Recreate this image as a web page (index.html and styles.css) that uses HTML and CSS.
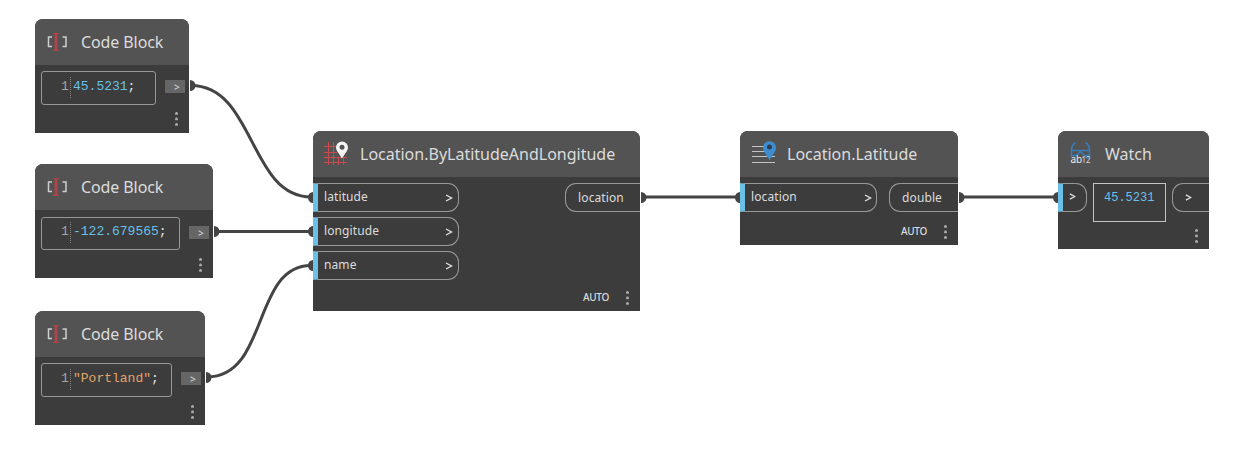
FILE: index.html
```html
<!DOCTYPE html>
<html lang="en">
<head>
<meta charset="utf-8">
<title>Location graph</title>
<link rel="stylesheet" href="styles.css">
</head>
<body>
<main class="canvas">
  <svg class="wires" width="1254" height="456" viewBox="0 0 1254 456">
    <g class="wire-paths">
      <path d="M191 85.500C255 85.500 249 197 311 197"/>
      <path d="M215 231.500H311"/>
      <path d="M207 377C269 377 252 265.500 311 265.500"/>
      <path d="M642 197H739"/>
      <path d="M960 197H1057"/>
    </g>
    <g class="wire-ends">
      <path d="M190 80a5.500 5.500 0 0 1 0 11zM214 226a5.500 5.500 0 0 1 0 11zM206 372a5.500 5.500 0 0 1 0 11zM641 192a5.500 5.500 0 0 1 0 11zM959 192a5.500 5.500 0 0 1 0 11z"/>
      <path d="M313 192a5 5.500 0 0 0 0 11zM313 226a5 5.500 0 0 0 0 11zM313 260a5 5.500 0 0 0 0 11zM740 192a5 5.500 0 0 0 0 11zM1058 192a5 5.500 0 0 0 0 11z"/>
    </g>
  </svg>

  <section class="node code-node code-latitude">
    <header class="head">
      <svg class="icon" width="28" height="28" viewBox="0 0 28 28"><path class="bracket" d="M8 9H4.500V18.500H8M18.500 9H22V18.500H18.500"/><path class="cursor" d="M12 5.500V22.500"/><path class="cursor-serif" d="M9 5.500H15M9 22.500H15"/></svg>
      <h2 class="title">Code Block</h2>
    </header>
    <div class="code-row">
      <div class="editor"><span class="line">1</span><code class="number">45.5231<b class="semi">;</b></code></div>
      <span class="tag">&gt;</span>
    </div>
    <footer class="foot"><i class="menu"></i></footer>
  </section>

  <section class="node code-node code-longitude">
    <header class="head">
      <svg class="icon" width="28" height="28" viewBox="0 0 28 28"><path class="bracket" d="M8 9H4.500V18.500H8M18.500 9H22V18.500H18.500"/><path class="cursor" d="M12 5.500V22.500"/><path class="cursor-serif" d="M9 5.500H15M9 22.500H15"/></svg>
      <h2 class="title">Code Block</h2>
    </header>
    <div class="code-row">
      <div class="editor"><span class="line">1</span><code class="number">-122.679565<b class="semi">;</b></code></div>
      <span class="tag">&gt;</span>
    </div>
    <footer class="foot"><i class="menu"></i></footer>
  </section>

  <section class="node code-node code-name">
    <header class="head">
      <svg class="icon" width="28" height="28" viewBox="0 0 28 28"><path class="bracket" d="M8 9H4.500V18.500H8M18.500 9H22V18.500H18.500"/><path class="cursor" d="M12 5.500V22.500"/><path class="cursor-serif" d="M9 5.500H15M9 22.500H15"/></svg>
      <h2 class="title">Code Block</h2>
    </header>
    <div class="code-row">
      <div class="editor"><span class="line">1</span><code class="string">"Portland"<b class="semi">;</b></code></div>
      <span class="tag">&gt;</span>
    </div>
    <footer class="foot"><i class="menu"></i></footer>
  </section>

  <section class="node node-create">
    <header class="head">
      <svg class="icon" width="28" height="28" viewBox="0 0 28 28"><path class="grid" d="M1 6.500H14M1 12.500H14M1 17.500H24M1 22.500H24M5.500 2V25M10.500 2V25M15.500 17V25M20.500 17V25"/><path class="pin-light" fill-rule="evenodd" d="M19 1.500a6 6 0 0 0-6 6c0 3 3 6 6 11 3-5 6-8 6-11a6 6 0 0 0-6-6zm0 3.200a2.500 2.500 0 1 1 0 5 2.500 2.500 0 0 1 0-5z"/></svg>
      <h2 class="title">Location.ByLatitudeAndLongitude</h2>
    </header>
    <div class="ports">
      <div class="inputs">
        <div class="port in"><span>latitude</span><svg class="chevron" width="8" height="8" viewBox="0 0 8 8"><path d="M1 1L6.500 4L1 7"/></svg></div>
        <div class="port in"><span>longitude</span><svg class="chevron" width="8" height="8" viewBox="0 0 8 8"><path d="M1 1L6.500 4L1 7"/></svg></div>
        <div class="port in"><span>name</span><svg class="chevron" width="8" height="8" viewBox="0 0 8 8"><path d="M1 1L6.500 4L1 7"/></svg></div>
      </div>
      <div class="port out"><span>location</span></div>
    </div>
    <footer class="foot"><span class="lacing">AUTO</span><i class="menu"></i></footer>
  </section>

  <section class="node node-latitude">
    <header class="head">
      <svg class="icon" width="28" height="28" viewBox="0 0 28 28"><path class="rules" d="M2 6.500H14M2 11.500H15M2 16.500H25M2 22.500H25"/><path class="pin-blue" d="M19.500 1.200a6.500 6.500 0 0 0-6.500 6.500c0 3.500 3.500 7 6.500 12.500 3-5.500 6.500-9 6.500-12.500a6.500 6.500 0 0 0-6.500-6.500z"/><circle class="pin-eye" cx="19.500" cy="7" r="2.500"/></svg>
      <h2 class="title">Location.Latitude</h2>
    </header>
    <div class="ports">
      <div class="inputs">
        <div class="port in"><span>location</span><svg class="chevron" width="8" height="8" viewBox="0 0 8 8"><path d="M1 1L6.500 4L1 7"/></svg></div>
      </div>
      <div class="port out"><span>double</span></div>
    </div>
    <footer class="foot"><span class="lacing">AUTO</span><i class="menu"></i></footer>
  </section>

  <section class="node node-watch">
    <header class="head">
      <svg class="icon" width="28" height="28" viewBox="0 0 28 28"><path class="glasses" d="M7.500 2.500C5 4 3.500 7 3.500 10.500V17M17.500 2.500C20 4 21.500 7 21.500 10.500V17M3.500 10.500H21.500M4 15.500H8.500L12.500 11.500L16.500 15.500H21.500M17 16L18.500 18H21.500"/><text class="ab" x="2.500" y="23">ab</text><text class="digits" x="13.500" y="23">12</text></svg>
      <h2 class="title">Watch</h2>
    </header>
    <div class="ports">
      <div class="inputs">
        <div class="port in"><svg class="chevron" width="7" height="7" viewBox="0 0 8 8"><path d="M1 1L6.500 4L1 7"/></svg></div>
      </div>
      <output class="value">45.5231</output>
      <div class="port out"><svg class="chevron" width="7" height="7" viewBox="0 0 8 8"><path d="M1 1L6.500 4L1 7"/></svg></div>
    </div>
    <footer class="foot"><i class="menu"></i></footer>
  </section>
</main>
</body>
</html>
```
FILE: styles.css
```css
* { box-sizing: border-box; }
body { margin: 0; background: #fff; }
.canvas {
  position: relative;
  width: 1254px;
  height: 456px;
  overflow: hidden;
  font-family: "Noto Sans", sans-serif;
  color: #dcdcdc;
}
.wires { position: absolute; left: 0; top: 0; }
.wire-paths { fill: none; stroke: #444; stroke-width: 3; }
.wire-ends { fill: #444; }

.node {
  position: absolute;
  display: flex;
  flex-direction: column;
  background: #3c3c3c;
  border-radius: 8px 8px 0 0;
}
.code-latitude { left: 35px; top: 19px; width: 154px; height: 114px; }
.code-longitude { left: 35px; top: 164px; width: 178px; height: 114px; }
.code-name { left: 35px; top: 311px; width: 170px; height: 114px; }
.node-create { left: 313px; top: 131px; width: 327px; height: 180px; }
.node-latitude { left: 740px; top: 131px; width: 218px; height: 114px; }
.node-watch { left: 1058px; top: 131px; width: 151px; height: 118px; }

.head {
  display: flex;
  align-items: center;
  flex: none;
  height: 46px;
  padding-left: 10px;
  background: #535353;
  border-radius: 8px 8px 0 0;
}
.code-node .head { padding-left: 9px; }
.icon { flex: none; }
.title {
  margin: 0 0 0 9px;
  font-size: 16px;
  font-weight: 400;
  line-height: 24px;
  white-space: nowrap;
}
.code-node .title { letter-spacing: -0.1px; }

.bracket { fill: none; stroke: #cfcfcf; stroke-width: 1.500; }
.cursor { stroke: #ad4648; stroke-width: 3; }
.cursor-serif { stroke: #ad4648; stroke-width: 1; }
.grid { stroke: #c94b4e; stroke-width: 1; }
.pin-light { fill: #f4f4f4; }
.rules { stroke: #c4c4c4; stroke-width: 1; }
.pin-blue { fill: #3d8ed0; }
.pin-eye { fill: #303c48; }
.glasses { fill: none; stroke: #397cb6; stroke-width: 1.500; }
.ab { fill: #eee; font-size: 10px; }
.digits { fill: #ddd; font-size: 8px; }

.code-row {
  display: flex;
  align-items: flex-start;
  justify-content: space-between;
  padding: 6px 4px 0 6px;
}
.editor {
  display: flex;
  height: 34px;
  padding: 5px 20px 0 19px;
  border: 1px solid #989898;
  border-radius: 3px;
  font: 13px/20px "Liberation Mono", monospace;
}
.code-latitude .editor { width: 115px; }
.code-longitude .editor { width: 139px; height: 33px; margin-top: 1px; padding-top: 4px; }
.code-name .editor { width: 131px; }
.line {
  width: 10px;
  height: 21px;
  flex: none;
  border-right: 1px dotted #858585;
  color: #a5a5a5;
}
.editor code { margin-left: 2px; font: inherit; white-space: nowrap; }
.number { color: #6ac0e7; }
.string { color: #e0a56c; }
.semi { color: #e6e6e6; font-weight: 400; }
.tag {
  width: 20px;
  height: 13px;
  margin-top: 9px;
  padding-left: 9px;
  background: #666;
  font-size: 10px;
  line-height: 14px;
}
.code-longitude .tag { margin-top: 10px; }

.foot {
  display: flex;
  align-items: center;
  justify-content: flex-end;
  gap: 17px;
  height: 14px;
  margin-top: auto;
  margin-bottom: 6px;
  padding-right: 11px;
}
.lacing {
  position: relative;
  top: -1px;
  font-size: 10px;
  font-weight: 500;
  letter-spacing: -0.3px;
  line-height: 14px;
}
.menu {
  width: 3px;
  height: 15px;
  background: radial-gradient(circle at 1.500px 1.500px, #aaa 1.200px, transparent 1.600px) 0 0 / 3px 5.500px;
}
.code-latitude .foot { margin-bottom: 7px; }

.ports { display: flex; align-items: flex-start; padding-top: 6px; }
.inputs { display: flex; flex-direction: column; gap: 5px; }
.port {
  display: flex;
  align-items: center;
  height: 29px;
  border: 1px solid #989898;
  font-size: 12px;
  line-height: 16px;
}
.in {
  justify-content: space-between;
  width: 146px;
  padding: 0 5px 0 6px;
  border-left: 5px solid #6ac0e7;
  border-radius: 0 11px 11px 0;
}
.in span { padding-bottom: 2px; letter-spacing: 0.1px; }
.out {
  justify-content: center;
  width: 75px;
  margin-left: auto;
  border-right: 0;
  border-radius: 11px 0 0 11px;
}
.out span { padding-right: 4px; letter-spacing: 0.1px; }
.chevron { flex: none; fill: none; stroke: #e0e0e0; stroke-width: 1.400; }
.node-latitude .in { width: 137px; padding-right: 4px; }
.node-latitude .out { width: 69px; }
.node-watch .in { width: 29px; padding: 0 0 2px 6px; }
.node-watch .out { width: 37px; padding-right: 5px; }
.value {
  width: 73px;
  height: 39px;
  margin-left: 6px;
  padding: 4px 0 0 10px;
  border: 1px solid #c4c4c4;
  color: #6ac0e7;
  font: 12px/20px "Liberation Mono", monospace;
}
```
